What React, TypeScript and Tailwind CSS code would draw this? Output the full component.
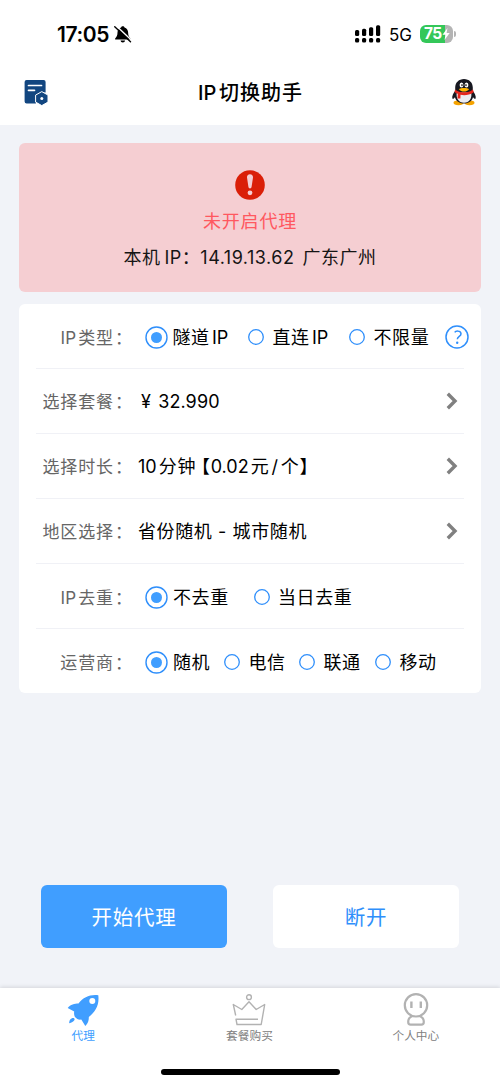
import React from "react";

type Option = { text: string; className: string };

// latin runs sit tighter than the chinese text around them
const Mixed = ({ text }: { text: string }) => {
  return (
    <span className="[word-spacing:-3.5px]">
      {text.split(/([A-Za-z0-9.]+)/).map((part, i) =>
        i % 2 === 1 ? (
          <span key={i} className="tracking-normal">
            {part}
          </span>
        ) : (
          part
        )
      )}
    </span>
  );
};

const Radio = ({ checked }: { checked?: boolean }) => {
  if (checked) {
    return (
      <svg width="23" height="23" viewBox="0 0 23 23" className="shrink-0">
        <circle cx="11.500" cy="11.500" r="10.500" fill="none" stroke="#2f8ffb" strokeWidth="1.400" />
        <circle cx="11.500" cy="11.500" r="5.500" fill="#409eff" />
      </svg>
    );
  }
  return (
    <svg width="16" height="16" viewBox="0 0 16 16" className="shrink-0">
      <circle cx="8" cy="8" r="7.300" fill="none" stroke="#2f8ffb" strokeWidth="1.300" />
    </svg>
  );
};

const RadioGroup = ({ options }: { options: Option[] }) => {
  return (
    <div className="flex items-center">
      {options.map((o, i) => (
        <label key={o.text} className={`flex items-center ${o.className}`}>
          <Radio checked={i === 0} />
          <span className={i === 0 ? "ml-[5px]" : "ml-[8.5px]"}>
            <Mixed text={o.text} />
          </span>
        </label>
      ))}
    </div>
  );
};

const Row = ({ label, arrow, children }: { label: string; arrow?: boolean; children: React.ReactNode }) => {
  return (
    <div
      className={`flex h-[65px] items-center border-b-[1.5px] border-[#f0f1f6] last:h-16 last:border-0 ${arrow ? "" : "pt-[2px]"}`}
    >
      <div className="mt-1 flex w-[94px] shrink-0 justify-end pr-[2px] text-[17px] tracking-[0.9px] text-[#666]">
        <Mixed text={label} />
        <span className="w-[14px] pl-px">：</span>
      </div>
      <div className="flex-1 whitespace-nowrap text-[18px] tracking-[0.6px] text-black">{children}</div>
      {arrow && (
        <svg width="14" height="20" viewBox="0 0 14 20" fill="none" className="mr-[5px]">
          <path d="M2.8 2.8 10 10l-7.2 7.2" stroke="#808080" strokeWidth="3.400" />
        </svg>
      )}
    </div>
  );
};

const StatusBar = () => {
  return (
    <div className="flex h-[58px] items-end pb-[11px] pl-[57px] pr-[44px]">
      <span className="text-[21px] font-semibold leading-6 tracking-[-0.4px]">17:05</span>
      <svg width="18" height="19" viewBox="0 0 19 20" className="mb-[3px] ml-[5px]">
        <path d="M9.3 1.3c-.9 0-1.6.5-1.8 1.2C5 3.300 3.700 5.300 3.700 8c0 3.200-.9 4.600-2.500 6.200v1h16.200v-1C15.800 12.600 14.900 11.200 14.900 8c0-2.700-1.300-4.700-3.800-5.500-.2-.7-.9-1.200-1.800-1.200ZM6.900 16.300h4.800c-.2 1.300-1.100 2.100-2.400 2.100s-2.200-.8-2.400-2.100Z" fill="#000" />
        <path d="M2.300 .8 18.800 16.300" stroke="#fff" strokeWidth="1.500" />
        <path d="M.8 1.900 17.400 17.700" stroke="#000" strokeWidth="1.500" strokeLinecap="round" />
      </svg>
      <svg width="27" height="18" viewBox="0 0 27 18" className="mb-1 ml-auto">
        <rect x="1" y="5" width="4.200" height="6" rx="1.500" />
        <rect x="8" y="3.800" width="4.200" height="7.200" rx="1.500" />
        <rect x="15" y="2.200" width="4.200" height="8.800" rx="1.500" />
        <rect x="22" y="0.200" width="4.200" height="10.800" rx="1.500" />
        <rect x="1" y="13" width="4.200" height="4.400" rx="1.500" />
        <rect x="8" y="13" width="4.200" height="4.400" rx="1.500" />
        <rect x="15" y="13" width="4.200" height="4.400" rx="1.500" />
        <rect x="22" y="13" width="4.200" height="4.400" rx="1.500" />
      </svg>
      <span className="ml-2 text-[17px] leading-6">5G</span>
      <div className="mb-1 ml-2 flex items-center">
        <div className="flex h-[18px] w-[33px] items-center rounded-[6px] bg-linear-to-r from-[#34c759] from-76% to-[#b4b4b4] to-76% pl-[4px] text-white">
          <span className="text-[15.500px] font-bold leading-none tracking-[-0.5px]">75</span>
          <svg width="8" height="12" viewBox="0 0 8 12">
            <path d="M5.500 0 .5 6.700h3L2.500 12l5.200-7H4.600Z" fill="#fff" />
          </svg>
        </div>
        <span className="ml-px h-[6px] w-[2px] rounded-r-full bg-[#b4b4b4]"></span>
      </div>
    </div>
  );
};

const Penguin = () => {
  return (
    <svg width="26" height="28" viewBox="0 0 26 28">
      <ellipse cx="7.500" cy="24.800" rx="5" ry="2.400" fill="#f5a300" />
      <ellipse cx="18.500" cy="24.800" rx="5" ry="2.400" fill="#f5a300" />
      <path d="M5 12C2.500 14.500.8 18 1.300 20.300c.4 1.200 2 .2 3-1.500ZM21 12c2.500 2.500 4.200 6 3.700 8.300-.4 1.200-2 .2-3-1.500Z" fill="#171820" />
      <path d="M13 1C8 1 4.200 4.500 4.200 9.500v5.200C2.500 20 6 25.500 13 25.500S23.500 20 21.800 14.700V9.500C21.800 4.500 18 1 13 1Z" fill="#171820" />
      <path d="M5.800 14.500C4.800 20.500 7.500 24.700 13 24.700s8.200-4.200 7.200-10.200Z" fill="#ececf0" />
      <ellipse cx="10.500" cy="7" rx="1.900" ry="2.600" fill="#fff" />
      <ellipse cx="15.500" cy="7" rx="1.900" ry="2.600" fill="#fff" />
      <ellipse cx="11" cy="7.200" rx=".7" ry="1.100" fill="#111" />
      <ellipse cx="15" cy="7.200" rx=".7" ry="1.100" fill="#111" />
      <path d="M4 11.500c4.700 3.800 13.500 3.800 18 0l.7 2.700c-4.500 3.300-10.200 3.300-13.200 2.500l-.1 3.800H6.500l.3-4.700c-1.300-.3-2.500-1-3.200-1.700Z" fill="#e5251c" />
      <path d="M7.800 11c2-1.500 8.400-1.500 10.400 0-1.500 2-3.200 2.500-5.200 2.500s-3.700-.5-5.200-2.500Z" fill="#ffb600" />
    </svg>
  );
};

const Header = () => {
  return (
    <div className="flex h-[67px] items-center justify-between pl-6 pr-[23px]">
      <svg width="26" height="27" viewBox="0 0 26 27" className="mt-px">
        <path d="M2.600 1h17a2 2 0 0 1 2 2v10.500h-4.200l-5.500 3v8H2.600a2 2 0 0 1-2-2V3a2 2 0 0 1 2-2Z" fill="#124680" />
        <path d="M4.500 6.500h13M4.500 11.300h6" stroke="#fff" strokeWidth="1.700" strokeLinecap="round" />
        <path d="m17.800 12.600 6.200 3.500v7L17.800 26.600l-6.200-3.500v-7Z" fill="#124680" stroke="#fff" strokeWidth="1" />
        <circle cx="17.800" cy="19.600" r="1.500" fill="#fff" />
      </svg>
      <h1 className="pt-[2px] text-[20px] font-medium tracking-[1px] text-black">
        <Mixed text="IP 切换助手" />
      </h1>
      <Penguin />
    </div>
  );
};

const StatusCard = () => {
  return (
    <div className="flex h-[149px] flex-col items-center rounded-[6px] bg-[#f5ced2] pt-[27px]">
      <svg width="30" height="30" viewBox="0 0 30 30">
        <circle cx="15" cy="15" r="14.800" fill="#da1f08" />
        <path d="M15 4.200c2 0 3.200 1.300 3 3.300l-1.400 9.300c-.3 2.200-2.900 2.200-3.200 0L12 7.500c-.2-2 1-3.300 3-3.300Z" fill="#f5ced2" />
        <circle cx="15" cy="22.800" r="2.400" fill="#f5ced2" />
      </svg>
      <p className="mt-2 text-[18px] leading-7 tracking-[0.8px] text-[#ff5860]">未开启代理</p>
      <p className="mt-2 whitespace-pre text-[18px] leading-7 tracking-[0.5px] text-[#151515] [word-spacing:-1.5px]">
        本机 IP：14.19.13.62  广东广州
      </p>
    </div>
  );
};

const SettingsCard = () => {
  return (
    <div className="mt-3 h-[389px] rounded-[6px] bg-white px-[17px]">
      <Row label="IP 类型">
        <div className="flex items-center pl-[14.5px]">
          <RadioGroup
            options={[
              { text: "隧道 IP", className: "w-[103.500px]" },
              { text: "直连 IP", className: "w-[101px]" },
              { text: "不限量", className: "w-[96px]" },
            ]}
          />
          <svg width="24" height="24" viewBox="0 0 24 24" fill="none" className="-mr-2 shrink-0" stroke="#2f8ffb" strokeWidth="1.500">
            <circle cx="12" cy="12" r="11" />
            <path d="M9.700 7.300C10.500 6 15.500 5 16 8.700c.2 2.500-3.700 2.800-3.700 5.500" />
            <circle cx="12.200" cy="17.800" r="1.200" fill="#2f8ffb" stroke="none" />
          </svg>
        </div>
      </Row>
      <Row label="选择套餐" arrow>
        <span className="pl-[11px] tracking-[0.1px] [word-spacing:2px]">¥ 32.990</span>
      </Row>
      <Row label="选择时长" arrow>
        <div className="flex pl-2">
          <Mixed text="10 分钟" />
          <span className="pl-[5px] [font-feature-settings:'halt']">【</span>
          <Mixed text="0.02 元 / 个" />
          <span>】</span>
        </div>
      </Row>
      <Row label="地区选择" arrow>
        <span className="pl-2">省份随机 - 城市随机</span>
      </Row>
      <Row label="IP 去重">
        <div className="pl-[15px]">
          <RadioGroup
            options={[
              { text: "不去重", className: "w-[108.500px]" },
              { text: "当日去重", className: "" },
            ]}
          />
        </div>
      </Row>
      <Row label="运营商">
        <div className="pl-[15px]">
          <RadioGroup
            options={[
              { text: "随机", className: "w-[79px]" },
              { text: "电信", className: "w-[75px]" },
              { text: "联通", className: "w-[76px]" },
              { text: "移动", className: "" },
            ]}
          />
        </div>
      </Row>
    </div>
  );
};

const TabBar = () => {
  return (
    <div className="flex h-24 flex-col bg-white shadow-[0_-1px_4px_rgba(0,0,0,0.12)]">
      <div className="grid grid-cols-3 pr-px pt-1 text-center text-[11.700px] text-[#808080]">
        <div className="flex flex-col items-center text-[#409eff]">
          <svg width="34" height="34" viewBox="0 0 34 34" fill="#409eff">
            <path d="M32.300 3.200C24 2.200 17.500 5 12.500 11.500 8.500 11.500 4.500 12.500 1.700 16l6.500 3.500c-.4 2 .1 4.500.8 5.500 1.500 2 4 3 6.300 2.500l4 6.500c3-2.500 3.700-6.500 3.500-9C29.500 20 33.500 13 32.300 3.200Z" />
            <path d="M3.200 31.300c0-3 1.500-5.500 4.500-5.300 2 .8.800 3.800-4.500 5.300Z" />
            <circle cx="26.300" cy="9" r="3" fill="#fff" />
          </svg>
          <span className="mt-[2px] leading-4">代理</span>
        </div>
        <div className="flex flex-col items-center">
          <svg width="34" height="34" viewBox="0 0 34 34" fill="none" stroke="#b2b2b2" strokeWidth="1.400" strokeLinejoin="round">
            <circle cx="17" cy="5.200" r="2.400" />
            <path d="M3.700 23.500 1.300 12.500l8.500 5L17 9.800l7.200 7.700 8.500-5L29.200 32.500H5L4 27.200h22" />
          </svg>
          <span className="mt-[2px] leading-4">套餐购买</span>
        </div>
        <div className="flex flex-col items-center">
          <svg width="34" height="34" viewBox="0 0 34 34" fill="none" stroke="#b2b2b2" strokeWidth="2.200">
            <circle cx="17" cy="13.300" r="11.200" />
            <path d="M12.400 9.500V16M21.800 9.500V16" strokeWidth="2.400" />
            <path d="M13 24.300c-2.500 1-3.800 3-3.800 5.700 0 1.800.8 2.700 2.500 2.700h10.600c1.700 0 2.500-.9 2.500-2.700 0-2.700-1.300-4.700-3.800-5.700" />
          </svg>
          <span className="mt-[2px] leading-4">个人中心</span>
        </div>
      </div>
      <div className="mx-auto mb-[9px] mt-auto h-[6px] w-[179px] rounded-full bg-black"></div>
    </div>
  );
};

const App = () => {
  return (
    <div className="flex h-[1084px] w-[500px] flex-col overflow-hidden bg-[#f1f3f8] font-[Inter,'Noto_Sans_CJK_SC',sans-serif] text-black">
      <div className="bg-white">
        <StatusBar />
        <Header />
      </div>
      <div className="px-[19px] pt-[18px]">
        <StatusCard />
        <SettingsCard />
      </div>
      <div className="mb-10 mt-auto flex justify-between px-[41px] text-[20.500px] tracking-[0.8px]">
        <button className="h-[63px] w-[186px] rounded-[6px] bg-[#409eff] pt-[3px] text-white">开始代理</button>
        <button className="h-[63px] w-[186px] rounded-[6px] bg-white pt-[3px] text-[#2f8ffb]">断开</button>
      </div>
      <TabBar />
    </div>
  );
};

export default App;
